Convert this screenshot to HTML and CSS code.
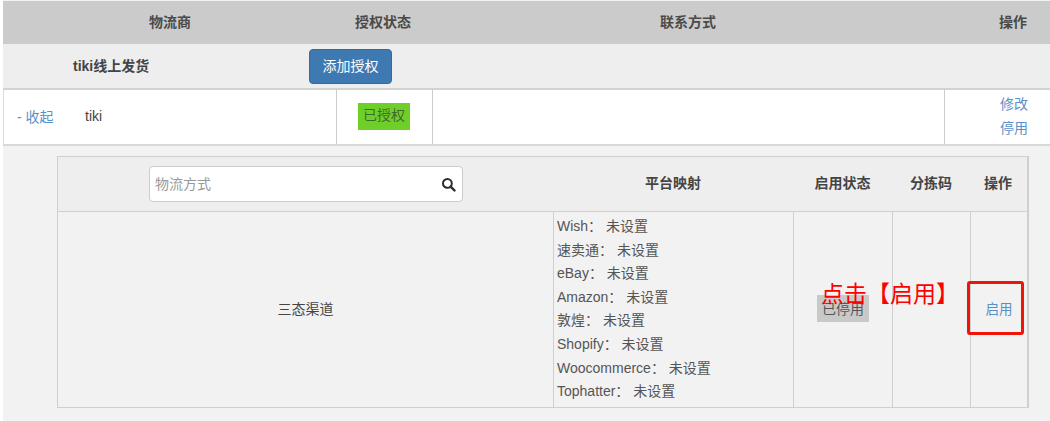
FILE: index.html
```html
<!DOCTYPE html>
<html lang="zh">
<head>
<meta charset="utf-8">
<title>物流商</title>
<link rel="stylesheet" href="styles.css">
</head>
<body>
<main class="page">
  <div class="cols head">
    <div class="c">物流商</div>
    <div class="c">授权状态</div>
    <div class="c">联系方式</div>
    <div class="r">操作</div>
  </div>
  <div class="group">
    <div class="group-name">tiki线上发货</div>
    <button class="btn">添加授权</button>
  </div>
  <div class="cols carrier">
    <div class="cell name"><a class="link toggle">- 收起</a><span>tiki</span></div>
    <div class="cell center"><span class="tag on">已授权</span></div>
    <div class="cell"></div>
    <div class="cell ops"><a class="link">修改</a><a class="link">停用</a></div>
  </div>
  <section class="panel">
    <div class="inner ihead">
      <div class="icell search-cell">
        <div class="search">
          <span class="ph">物流方式</span>
          <svg class="sicon" viewBox="0 0 16 16" width="15" height="15" aria-hidden="true"><circle cx="6.8" cy="6.8" r="4.7" fill="none" stroke="#2b2b2b" stroke-width="2.1"/><path d="M10.3 10.3 14.4 14.4" stroke="#2b2b2b" stroke-width="2.6" stroke-linecap="round"/></svg>
        </div>
      </div>
      <div class="icell th">平台映射</div>
      <div class="icell th">启用状态</div>
      <div class="icell th">分拣码</div>
      <div class="icell th">操作</div>
    </div>
    <div class="inner ibody">
      <div class="icell mid">三态渠道</div>
      <div class="icell map">
        <div>Wish： 未设置</div>
        <div>速卖通： 未设置</div>
        <div>eBay： 未设置</div>
        <div>Amazon： 未设置</div>
        <div>敦煌： 未设置</div>
        <div>Shopify： 未设置</div>
        <div>Woocommerce： 未设置</div>
        <div>Tophatter： 未设置</div>
      </div>
      <div class="icell mid"><span class="tag off">已停用</span></div>
      <div class="icell"></div>
      <div class="icell mid"><a class="link enable">启用</a></div>
    </div>
  </section>
  <div class="note">点击【启用】</div>
  <div class="mark"></div>
</main>
</body>
</html>
```
FILE: styles.css
```css
* { box-sizing: border-box; }
html, body { margin: 0; padding: 0; background: #fff; }
body {
  width: 1050px;
  height: 421px;
  overflow: hidden;
  font-family: "Liberation Sans", "Noto Sans CJK SC", sans-serif;
  font-size: 14px;
  color: #444;
}
.page {
  position: relative;
  margin-left: 3px;
  height: 421px;
  background: #f2f2f2;
  padding-top: 1px;
}
.cols {
  display: grid;
  grid-template-columns: 333px 96px 512px 106px;
}
.head {
  height: 43px;
  background: #cbcbcb;
  align-items: center;
  font-weight: bold;
  color: #4a4a4a;
  padding-bottom: 3px;
}
.c { text-align: center; }
.head .c:first-child { padding-left: 1px; }
.head .c:nth-child(2) { padding-right: 2px; }
.r { text-align: right; padding-right: 23px; }
.group {
  height: 46px;
  background: #eee;
  border-bottom: 2px solid #d2d2d2;
  display: grid;
  grid-template-columns: 306px auto;
  align-items: center;
}
.group-name { padding-left: 70px; font-weight: bold; padding-bottom: 3px; }
.btn {
  width: 83px;
  height: 35px;
  background: #3f79b2;
  color: #fff;
  border: 1px solid #366a9e;
  border-radius: 4px;
  font: inherit;
  padding: 0 0 2px;
}
.carrier {
  height: 56px;
  background: #fff;
  border-bottom: 2px solid #d8d8d8;
}
.cell { border-right: 1px solid #ccc; display: flex; align-items: center; position: relative; left: 1px; }
.cell:last-child { border-right: 0; }
.cols.carrier .cell:first-child { border-left: 1px solid #ddd; left: 0; padding-left: 13px; width: 334px; }
.name { padding-bottom: 2px; }
.name .toggle { width: 68px; }
.center { justify-content: center; padding-right: 1px; }
.ops {
  flex-direction: column;
  align-items: flex-end;
  justify-content: center;
  gap: 6px;
  padding-right: 23px;
  line-height: 18px;
  padding-bottom: 2px;
}
.link { color: #5b8fc7; }
.tag { display: inline-block; padding: 0 5px; line-height: 25px; height: 27px; }
.carrier .tag { margin-bottom: 2px; }
.on { background: #6fcf29; color: #3f6b2a; }
.off { background: #c9c9c9; color: #555; line-height: 28px; }
.panel {
  margin: 10px 22px 0 54px;
  border: 1px solid #cfcfcf;
  border-width: 1px 2px 1px 1px;
  width: 972px;
  height: 252px;
}
.inner {
  display: grid;
  grid-template-columns: 496px 240px 99px 78px 56px;
}
.ihead { height: 55px; background: #eee; border-bottom: 1px solid #cfcfcf; }
.ibody { height: 195px; }
.icell { border-right: 1px solid #cfcfcf; }
.icell:last-child { border-right: 0; }
.ihead .icell { border-right: 0; }
.th {
  display: flex;
  align-items: center;
  justify-content: center;
  font-weight: bold;
  padding: 0 2px 4px 0;
}
.search-cell { display: flex; align-items: center; justify-content: flex-start; padding-left: 91px; }
.search {
  width: 314px;
  height: 36px;
  background: #fff;
  border: 1px solid #ccc;
  border-radius: 4px;
  display: flex;
  align-items: center;
  justify-content: space-between;
  padding: 0 6px 2px 5px;
}
.ph { color: #999; }
.sicon { margin-top: 3px; }
.mid { display: flex; align-items: center; justify-content: center; padding-bottom: 3px; }
.map { padding: 3px 0 0 3px; line-height: 23.6px; color: #555; }
.enable { font-size: 13.5px; padding-bottom: 1px; }
.note {
  position: absolute;
  left: 818px;
  top: 279px;
  font-size: 23px;
  line-height: 30px;
  color: #f00;
}
.mark {
  position: absolute;
  left: 964px;
  top: 281px;
  width: 57px;
  height: 54px;
  border: 3px solid #f01408;
  border-radius: 3px;
}
```
